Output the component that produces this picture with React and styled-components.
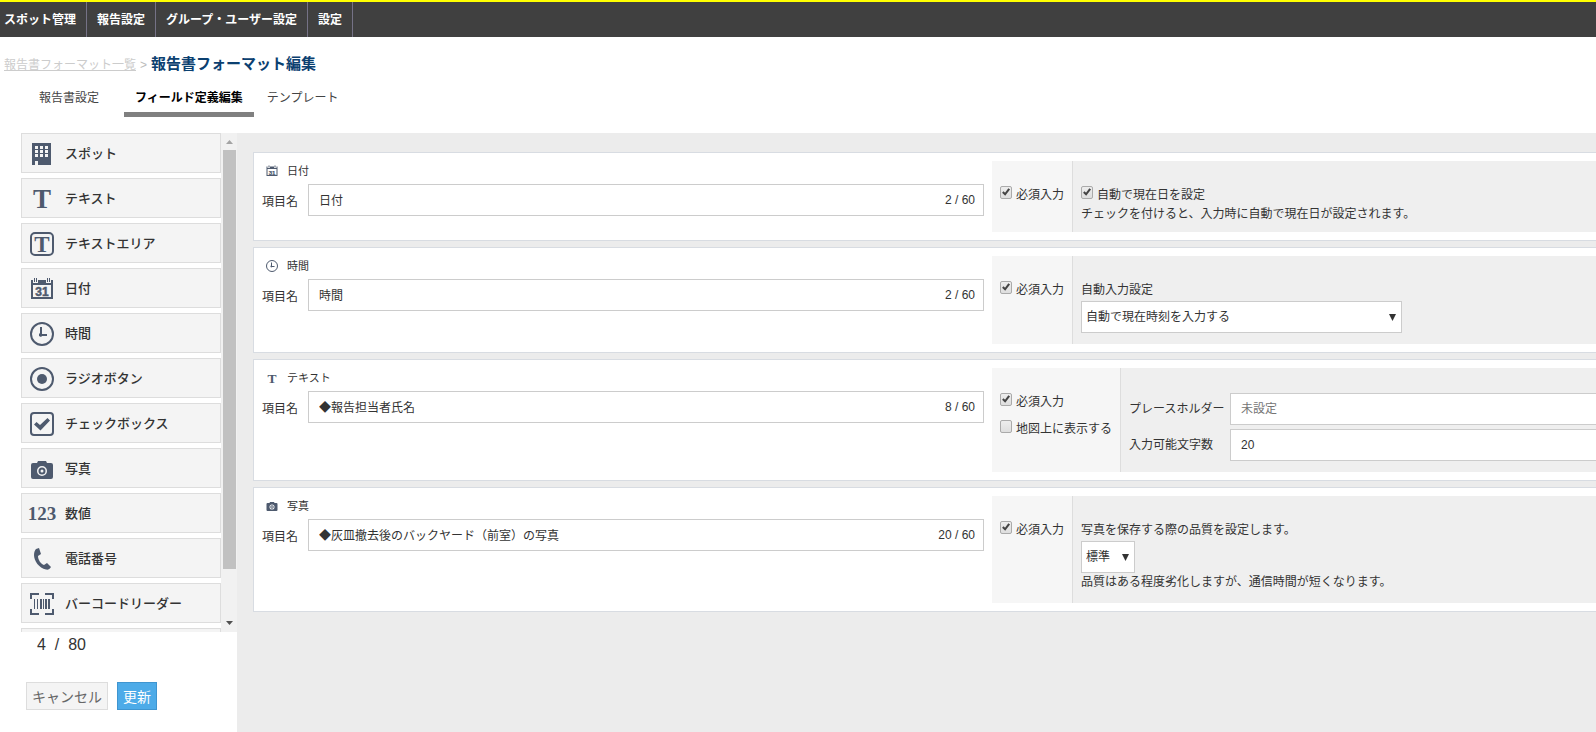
import React from 'react'
import styled, { createGlobalStyle } from 'styled-components'

const menus = ['スポット管理', '報告設定', 'グループ・ユーザー設定', '設定']

const parts = [
  { icon: 'spot', name: 'スポット' },
  { icon: 'text', name: 'テキスト' },
  { icon: 'textarea', name: 'テキストエリア' },
  { icon: 'date', name: '日付' },
  { icon: 'time', name: '時間' },
  { icon: 'radio', name: 'ラジオボタン' },
  { icon: 'check', name: 'チェックボックス' },
  { icon: 'photo', name: '写真' },
  { icon: 'number', name: '数値' },
  { icon: 'phone', name: '電話番号' },
  { icon: 'barcode', name: 'バーコードリーダー' },
  { icon: null, name: '' },
]

const shapes = {
  spot: (
    <path fillRule="evenodd" d="M2 1H21V23H8V19H5V23H2Z M5 4V7H8V4Z M10 4V7H13V4Z M15 4V7H18V4Z M5 8V11H8V8Z M10 8V11H13V8Z M15 8V11H18V8Z M5 12V15H8V12Z M10 12V15H13V12Z M15 12V15H18V12Z" />
  ),
  text: <text x="12" y="21" textAnchor="middle" fontSize="27">T</text>,
  textarea: (
    <>
      <rect x="1" y="1" width="22" height="22" rx="4" fill="none" stroke="currentColor" strokeWidth="2" />
      <text x="12" y="20" textAnchor="middle" fontSize="23">T</text>
    </>
  ),
  date: (
    <>
      <path fillRule="evenodd" d="M1 3H3V6H8V3H16V6H21V3H23V22H1Z M3 8V20H21V8Z" />
      <path d="M4 1H5V5H4Z M6 1H7V5H6Z M17 1H18V5H17Z M19 1H20V5H19Z" />
      <text className="sans" x="12" y="19" textAnchor="middle" fontSize="12" stroke="currentColor" strokeWidth="0.5">31</text>
    </>
  ),
  time: (
    <>
      <circle cx="12" cy="12" r="11" fill="none" stroke="currentColor" strokeWidth="2" />
      <path d="M10 5H12V12H17V14H12L11 15L9 14V12L10 11Z" />
    </>
  ),
  radio: (
    <>
      <circle cx="12" cy="12" r="11" fill="none" stroke="currentColor" strokeWidth="2" />
      <circle cx="12" cy="12" r="5" />
    </>
  ),
  check: (
    <>
      <rect x="1" y="1" width="22" height="22" rx="3" fill="none" stroke="currentColor" strokeWidth="2" />
      <path d="M4 12.500L6.500 10L10 13L17.500 6L20 8.500L10.500 18.500Z" />
    </>
  ),
  photo: (
    <path fillRule="evenodd" d="M8 4H16L17 6H21Q23 6 23 8V20Q23 22 21 22H3Q1 22 1 20V8Q1 6 3 6H7Z M12 9A5 5 0 1 0 12 19A5 5 0 1 0 12 9Z M12 10.500A3.500 3.500 0 1 1 12 17.500A3.500 3.500 0 1 1 12 10.500Z M12 12.500A1.500 1.500 0 1 0 12 15.500A1.500 1.500 0 1 0 12 12.500Z" />
  ),
  number: <text x="12" y="18" textAnchor="middle" fontSize="19">123</text>,
  phone: (
    <path d="M6 2L9 1L11 7L8 9C8 13 11 17 14 18L17 16L21 20C20 22 18 23 16 22.500C9 21 4 14 4 8C4 5 5 3 6 2Z" />
  ),
  barcode: (
    <path d="M0 1H9V3H2V7H0Z M15 1H24V7H22V3H15Z M0 17H2V21H9V23H0Z M22 17H24V23H15V21H22Z M4 7H5V17H4Z M7 7H8V17H7Z M10 7H12V17H10Z M13 7H14V17H13Z M15 7H17V17H15Z M18 7H20V17H18Z" />
  ),
}

function Icon({ name, size = 24 }) {
  return (
    <Glyph viewBox="0 0 24 24" width={size} height={size} aria-hidden="true">
      {shapes[name]}
    </Glyph>
  )
}

function Check({ label, checked }) {
  return (
    <CheckLabel>
      <Checkbox type="checkbox" defaultChecked={checked} />
      {label}
    </CheckLabel>
  )
}

function Field({ id, icon, type, value, count, checks, bottom, children }) {
  return (
    <Card>
      <Definition>
        <CardTitle>
          <Icon name={icon} size={12} />
          {type}
        </CardTitle>
        <NameRow>
          <label htmlFor={id}>項目名</label>
          <NameBox>
            <NameInput id={id} defaultValue={value} />
            <span>{count} / 60</span>
          </NameBox>
        </NameRow>
      </Definition>
      <Options>
        <Flags>
          {checks.map((c) => (
            <Check key={c.label} {...c} />
          ))}
        </Flags>
        <Detail $bottom={bottom}>{children}</Detail>
      </Options>
    </Card>
  )
}

function App() {
  return (
    <>
      <GlobalStyle />
      <Page>
        <NavBar>
          {menus.map((m) => (
            <NavLink key={m} href="#">{m}</NavLink>
          ))}
        </NavBar>
        <Breadcrumb>
          <a href="#">報告書フォーマット一覧</a>
          <span>&gt;</span>
          <h1>報告書フォーマット編集</h1>
        </Breadcrumb>
        <Tabs>
          <Tab href="#">報告書設定</Tab>
          <Tab href="#" $active>フィールド定義編集</Tab>
          <Tab href="#">テンプレート</Tab>
        </Tabs>
        <Body>
          <Side>
            <Palette>
              <PartList>
                {parts.map((p, i) => (
                  <Part key={i}>
                    <IconCell>{p.icon && <Icon name={p.icon} />}</IconCell>
                    {p.name}
                  </Part>
                ))}
              </PartList>
              <ScrollBar aria-hidden="true">
                <Arrow viewBox="0 0 17 17"><path d="M5 11L8.500 7L12 11Z" fill="#a3a3a3" /></Arrow>
                <Thumb />
                <Arrow viewBox="0 0 17 17"><path d="M5 6L8.500 10L12 6Z" fill="#505050" /></Arrow>
              </ScrollBar>
            </Palette>
            <Counter>4&nbsp; /&nbsp; 80</Counter>
            <Actions>
              <Button type="button">キャンセル</Button>
              <Button type="button" $primary>更新</Button>
            </Actions>
          </Side>
          <Main>
            <CardList>
              <Field id="f1" icon="date" type="日付" value="日付" count={2}
                checks={[{ label: '必須入力', checked: true }]} bottom={9}>
                <Check label="自動で現在日を設定" checked />
                <Note $gap={1}>チェックを付けると、入力時に自動で現在日が設定されます。</Note>
              </Field>
              <Field id="f2" icon="time" type="時間" value="時間" count={2}
                checks={[{ label: '必須入力', checked: true }]} bottom={11}>
                <SelectLabel htmlFor="auto">自動入力設定</SelectLabel>
                <Select id="auto" $width={321}>
                  <option>自動で現在時刻を入力する</option>
                </Select>
              </Field>
              <Field id="f3" icon="text" type="テキスト" value="◆報告担当者氏名" count={8}
                checks={[{ label: '必須入力', checked: true }, { label: '地図上に表示する' }]} bottom={11}>
                <Settings>
                  <label htmlFor="placeholder">プレースホルダー</label>
                  <TextInput id="placeholder" placeholder="未設定" />
                  <label htmlFor="length">入力可能文字数</label>
                  <TextInput id="length" defaultValue="20" />
                </Settings>
              </Field>
              <Field id="f4" icon="photo" type="写真" value="◆灰皿撤去後のバックヤード（前室）の写真" count={20}
                checks={[{ label: '必須入力', checked: true }]} bottom={12}>
                <SelectLabel htmlFor="quality">写真を保存する際の品質を設定します。</SelectLabel>
                <Select id="quality" $width={54}>
                  <option>標準</option>
                </Select>
                <Note>品質はある程度劣化しますが、通信時間が短くなります。</Note>
              </Field>
            </CardList>
          </Main>
        </Body>
      </Page>
    </>
  )
}

export default App

const GlobalStyle = createGlobalStyle`
*{
  box-sizing:border-box;
}
body{
  margin:0;
  background:#fff;
  color:#333;
  font-family:"Liberation Sans","Noto Sans CJK JP",sans-serif;
  font-size:12px;
  line-height:18px;
}
input,select,button{
  font-family:inherit;
  font-size:inherit;
  color:inherit;
}
`
const Page = styled.div`
min-height:100vh;
display:flex;
flex-direction:column;
`
const NavBar = styled.nav`
display:flex;
height:37px;
background:#404040;
border-top:2px solid #ff0;
`
const NavLink = styled.a`
display:flex;
align-items:center;
padding:1px 10px 0;
border-right:1px solid #757286;
color:#fff;
font-weight:bold;
text-decoration:none;
&:first-child{
  padding-left:4px;
}
`
const Breadcrumb = styled.div`
display:flex;
align-items:center;
gap:4px;
height:28px;
margin:13px 4px 0;
color:#bbb;
a,span{
  padding-top:2px;
}
a{
  color:#ccc;
}
h1{
  margin:0;
  color:#0b4070;
  font-size:15px;
}
`
const Tabs = styled.nav`
display:flex;
padding-left:26px;
margin-bottom:16px;
`
const Tab = styled.a`
height:39px;
padding:${props => props.$active ? '0 11px' : '0 25px 0 13px'};
border-bottom:5px solid ${props => props.$active ? '#808080' : 'transparent'};
color:${props => props.$active ? '#000' : '#444'};
font-weight:${props => props.$active ? 'bold' : 'normal'};
line-height:41px;
text-decoration:none;
`
const Body = styled.div`
flex:1;
display:flex;
`
const Side = styled.aside`
flex:none;
width:237px;
padding-left:21px;
`
const Palette = styled.div`
display:flex;
height:499px;
overflow:hidden;
`
const PartList = styled.ul`
flex:1;
display:flex;
flex-direction:column;
gap:5px;
margin:0;
padding:0;
list-style:none;
`
const Part = styled.li`
flex:none;
display:flex;
align-items:center;
gap:7px;
height:40px;
padding:2px 0 0 4px;
background:#f4f4f4;
border:1px solid #ddd;
font-size:13px;
font-weight:500;
`
const IconCell = styled.span`
display:flex;
justify-content:center;
width:32px;
`
const Glyph = styled.svg`
flex:none;
overflow:visible;
color:#4e5a6e;
fill:currentColor;
text{
  font-family:"Liberation Serif",serif;
  font-weight:bold;
}
.sans{
  font-family:"Liberation Sans",sans-serif;
}
`
const ScrollBar = styled.div`
flex:none;
display:flex;
flex-direction:column;
width:16px;
background:#f1f1f1;
`
const Arrow = styled.svg`
flex:none;
width:17px;
height:17px;
`
const Thumb = styled.div`
flex:0 0 419px;
margin:0 1px auto 2px;
background:#c1c1c1;
`
const Counter = styled.div`
padding:4px 16px 2px;
font-size:16px;
`
const Actions = styled.div`
display:flex;
gap:9px;
padding:26px 5px;
`
const Button = styled.button`
height:28px;
padding:0 5px;
border:1px solid ${props => props.$primary ? '#3f95d0' : '#ddd'};
background:${props => props.$primary ? '#4dabe8' : '#f4f4f4'};
color:${props => props.$primary ? '#fff' : '#666'};
font-size:14px;
cursor:pointer;
`
const Main = styled.main`
flex:1;
min-width:0;
padding:19px 0 19px 16px;
background:#ececec;
overflow:hidden;
`
/* the cards run on past the right edge of the window */
const CardList = styled.div`
display:flex;
flex-direction:column;
gap:6px;
margin-right:-20px;
`
const Card = styled.section`
display:flex;
gap:8px;
padding:8px;
background:#fff;
border:1px solid #d8dce2;
`
const Definition = styled.div`
flex:722 1 0;
min-width:0;
`
const CardTitle = styled.div`
display:flex;
align-items:center;
gap:9px;
height:20px;
margin-bottom:3px;
padding-left:4px;
font-size:11px;
`
const NameRow = styled.div`
display:flex;
align-items:center;
gap:10px;
label{
  padding-top:4px;
}
`
const NameBox = styled.div`
flex:1;
display:flex;
align-items:center;
height:32px;
padding:0 8px 0 10px;
border:1px solid #ccc;
`
const NameInput = styled.input`
flex:1;
min-width:0;
height:28px;
padding:0 0 2px;
border:0;
outline:0;
background:none;
`
const Options = styled.div`
flex:615 1 0;
min-width:0;
display:flex;
background:#efefef;
`
const Flags = styled.div`
flex:none;
display:flex;
flex-direction:column;
gap:9px;
padding:25px 8px 8px;
background:#f6f6f6;
border-right:1px solid #ddd;
`
const Detail = styled.div`
flex:1;
min-width:0;
padding:25px 8px ${props => props.$bottom}px;
`
const CheckLabel = styled.label`
display:flex;
align-items:flex-start;
gap:4px;
`
const Checkbox = styled.input`
appearance:none;
width:12px;
height:13px;
margin:0;
border:1px solid #aaa;
border-radius:2px;
background:linear-gradient(#ededed,#dedede);
&:checked{
  background:url("data:image/svg+xml,%3Csvg xmlns='http://www.w3.org/2000/svg' viewBox='0 0 11 11'%3E%3Cpath d='M2 5.500L4.500 8L9 2' fill='none' stroke='%23444' stroke-width='2.300'/%3E%3C/svg%3E"),linear-gradient(#ededed,#dedede);
}
`
const Note = styled.p`
margin:${props => props.$gap || 0}px 0 0;
`
const SelectLabel = styled.label`
display:block;
margin-bottom:2px;
`
const Select = styled.select`
appearance:none;
display:block;
width:${props => props.$width}px;
max-width:100%;
height:32px;
padding:0 20px 0 4px;
border:1px solid #ccc;
border-radius:0;
background:#fff url("data:image/svg+xml,%3Csvg xmlns='http://www.w3.org/2000/svg' width='7' height='7'%3E%3Cpath d='M0 0H7L3.500 7Z' fill='%23333'/%3E%3C/svg%3E") no-repeat right 5px center;
`
const Settings = styled.div`
display:grid;
grid-template-columns:96px 1fr;
gap:4px 5px;
align-items:center;
`
const TextInput = styled.input`
width:100%;
height:32px;
padding:0 10px;
border:1px solid #ccc;
background:#fff;
&::placeholder{
  color:#757575;
}
`
